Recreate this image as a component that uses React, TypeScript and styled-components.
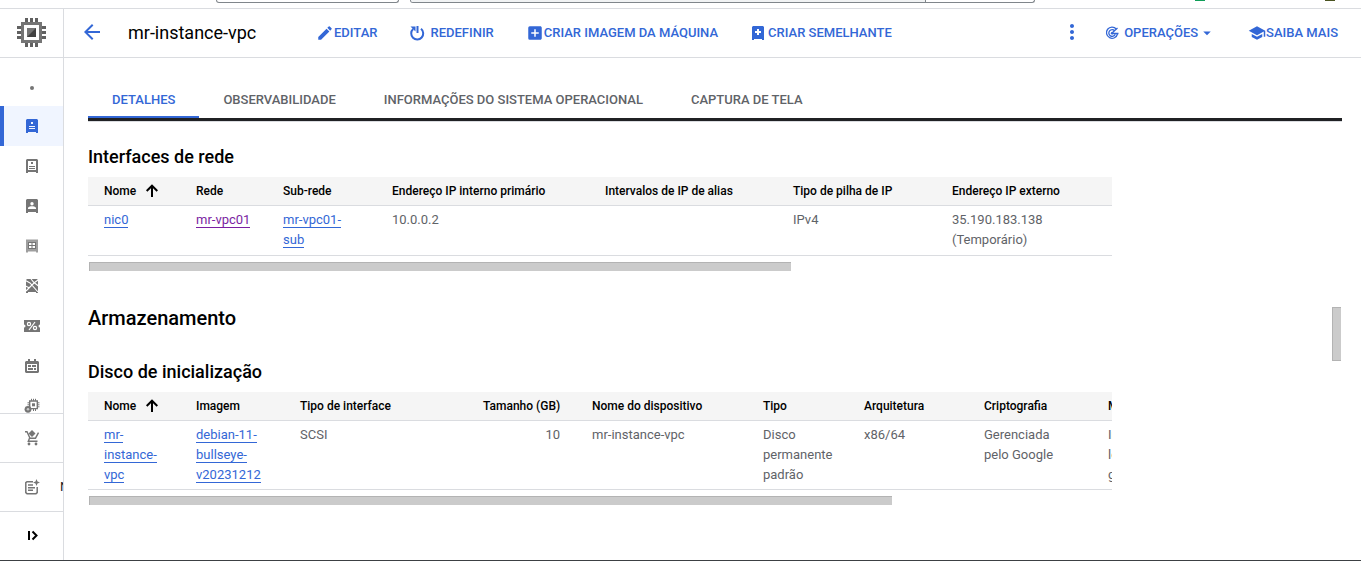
import React from "react";
import styled, { createGlobalStyle } from "styled-components";
import {
  MdAddBox,
  MdArrowBack,
  MdArrowDropDown,
  MdEdit,
  MdMoreVert,
  MdSchool,
} from "react-icons/md";

const blue = "#3367d6";
const grey = "#757575";
const line = "#dadce0";

const GlobalStyle = createGlobalStyle`
  * { box-sizing: border-box; }
  body {
    margin: 0;
    background: #fff;
    color: #000;
    font-family: Roboto, "Liberation Sans", sans-serif;
    font-size: 13px;
    line-height: 20px;
  }
  button { font: inherit; background: none; border: 0; padding: 0; cursor: pointer; }
  svg { display: block; flex: none; }
`;

const Shell = styled.div`
  display: flex;
  flex-direction: column;
  height: 100vh;
  overflow: hidden;
  border-bottom: 1px solid #3c4043;
`;

const TopStrip = styled.header`
  display: grid;
  grid-template-columns: 183px minmax(0, 625px) 1fr;
  column-gap: 11px;
  align-items: start;
  height: 9px;
  flex: none;
  padding-left: 216px;
  border-bottom: 1px solid ${line};
`;

const StripBox = styled.div`
  display: flex;
  height: 3px;
  border: 1px solid #80868b;
  border-top: 0;
  border-radius: 0 0 4px 4px;
  overflow: hidden;
`;

const SearchField = styled.div`
  flex: 1;
  background: #f1f3f4;
  border-right: 1px solid #80868b;
`;

const SearchAction = styled.div`
  width: 108px;
`;

const StripBadges = styled.div`
  display: flex;
  justify-content: flex-end;
  gap: 120px;
  padding-right: 26px;
`;

const Badge = styled.span<{ $color: string }>`
  width: 10px;
  height: 1px;
  background: ${(p) => p.$color};
`;

const Body = styled.div`
  display: flex;
  flex: 1;
  min-height: 0;
`;

const Sidebar = styled.nav`
  display: flex;
  flex-direction: column;
  width: 64px;
  flex: none;
  border-right: 1px solid ${line};
`;

const Product = styled.div`
  display: flex;
  align-items: center;
  justify-content: center;
  height: 49px;
  flex: none;
  border-bottom: 1px solid ${line};
`;

const NavList = styled.div`
  flex: 1;
  min-height: 0;
  padding-top: 8px;
  overflow: hidden;
`;

const NavItem = styled.a<{ $active?: boolean }>`
  display: flex;
  align-items: center;
  justify-content: center;
  height: 40px;
  color: ${(p) => (p.$active ? blue : grey)};
  background: ${(p) => (p.$active ? "#f0f5ff" : "transparent")};
  box-shadow: ${(p) => (p.$active ? `inset 4px 0 ${blue}` : "none")};
`;

const NavFooter = styled.a`
  display: flex;
  align-items: center;
  height: 49px;
  flex: none;
  padding-left: 24px;
  border-top: 1px solid ${line};
  color: ${grey};
  text-decoration: none;
  overflow: hidden;
`;

const FooterLabel = styled.span`
  padding-left: 20px;
  white-space: nowrap;
  color: #202124;
`;

const Content = styled.main`
  display: flex;
  flex-direction: column;
  flex: 1;
  min-width: 0;
`;

const Toolbar = styled.div`
  display: flex;
  align-items: center;
  height: 49px;
  flex: none;
  padding: 0 23px 0 16px;
  border-bottom: 1px solid ${line};
`;

const IconButton = styled.button`
  display: flex;
  padding-bottom: 2px;
  color: ${blue};
`;

const MoreButton = styled(IconButton)`
  margin-right: 20px;
`;

const Title = styled.h1`
  width: 212px;
  margin: 0;
  padding-left: 24px;
  font-size: 18px;
  font-weight: 400;
  line-height: 24px;
  white-space: nowrap;
`;

const Actions = styled.div`
  display: flex;
  flex: 1;
  gap: 32px;
`;

const Action = styled.button<{ $gap?: number }>`
  display: flex;
  align-items: center;
  gap: ${(p) => p.$gap ?? 0}px;
  color: ${blue};
  font-weight: 500;
  white-space: nowrap;
`;

const ToolbarEnd = styled.div`
  display: flex;
  align-items: center;
  gap: 32px;
`;

const MenuLabel = styled.span`
  display: flex;
  align-items: center;
`;

const Page = styled.div`
  display: grid;
  grid-template-columns: minmax(0, 1fr) 10px;
  grid-template-rows: auto minmax(0, 1fr);
  flex: 1;
  min-height: 0;
  padding: 20px 19px 0 24px;
`;

const Tabs = styled.div`
  display: flex;
  grid-column: 1 / -1;
  border-bottom: 3px solid #202124;
  box-shadow: 0 1px ${line};
`;

const Tab = styled.button<{ $active?: boolean }>`
  height: 40px;
  padding: 6px 24px 0;
  font-weight: 500;
  white-space: nowrap;
  color: ${(p) => (p.$active ? blue : "#5f6368")};
  border-bottom: 2px solid ${(p) => (p.$active ? blue : "transparent")};
`;

const Panel = styled.div`
  padding: 24px 220px 0 0;
  overflow: hidden;
`;

const Section = styled.section`
  margin-bottom: 33px;
`;

const Heading = styled.h2`
  margin: 0 0 28px;
  font-size: 20px;
  font-weight: 500;
  line-height: 28px;
`;

const SubHeading = styled.h3`
  margin: 0 0 8px;
  font-size: 18px;
  font-weight: 500;
  line-height: 24px;
`;

const TableScroll = styled.div`
  overflow: hidden;
`;

const Table = styled.table<{ $width: number }>`
  width: ${(p) => p.$width}px;
  table-layout: fixed;
  border-collapse: separate;
  border-spacing: 0;
`;

const Th = styled.th<{ $end?: boolean }>`
  height: 29px;
  padding: 0 16px;
  background: #f5f5f5;
  border-bottom: 1px solid ${line};
  font-size: 12px;
  font-weight: 500;
  text-align: ${(p) => (p.$end ? "right" : "left")};
  white-space: nowrap;
`;

const SortLabel = styled.span`
  display: flex;
  align-items: center;
  gap: 8px;
`;

const Td = styled.td<{ $end?: boolean }>`
  height: 50px;
  padding: 4px 16px;
  border-bottom: 1px solid ${line};
  color: #5f6368;
  text-align: ${(p) => (p.$end ? "right" : "left")};
  vertical-align: top;
`;

const Link = styled.a<{ $visited?: boolean }>`
  color: ${(p) => (p.$visited ? "#7b1fa2" : blue)};
  border-bottom: 1px solid currentColor;
  text-decoration: none;
`;

const HorizontalBar = styled.div<{ $thumb: number; $rest: number }>`
  display: grid;
  grid-template-columns: ${(p) => p.$thumb}fr ${(p) => p.$rest}fr;
  padding: 6px 0 0 1px;
`;

const VerticalBar = styled.div`
  display: grid;
  grid-template-rows: 186fr 54fr 199fr;
`;

const Thumb = styled.div`
  min-height: 9px;
  background: #cbcbcb;
  border: 1px solid #b3b3b3;
  border-width: 1px 0 0 1px;
`;

const VerticalThumb = styled(Thumb)`
  grid-row: 2;
  width: 9px;
  border-bottom-width: 1px;
`;

type Column = { label: string; width: number; end?: boolean; sorted?: boolean };

const networkColumns: Column[] = [
  { label: "Nome", width: 92, sorted: true },
  { label: "Rede", width: 87 },
  { label: "Sub-rede", width: 109 },
  { label: "Endereço IP interno primário", width: 213 },
  { label: "Intervalos de IP de alias", width: 188 },
  { label: "Tipo de pilha de IP", width: 159 },
  { label: "Endereço IP externo", width: 200 },
];

const diskColumns: Column[] = [
  { label: "Nome", width: 92, sorted: true },
  { label: "Imagem", width: 104 },
  { label: "Tipo de interface", width: 183 },
  { label: "Tamanho (GB)", width: 109, end: true },
  { label: "Nome do dispositivo", width: 171 },
  { label: "Tipo", width: 101 },
  { label: "Arquitetura", width: 120 },
  { label: "Criptografia", width: 124 },
  { label: "Modo", width: 120 },
];

const total = (columns: Column[]) => columns.reduce((sum, c) => sum + c.width, 0);

const Glyph = ({ children }: { children: React.ReactNode }) => (
  <svg width="16" height="16" viewBox="0 0 16 16" fill="currentColor" aria-hidden="true">
    {children}
  </svg>
);

const SortIcon = () => (
  <Glyph>
    <path fill="none" stroke="currentColor" strokeWidth="2" d="M8 14V3M2.700 8L8 2.700 13.300 8" />
  </Glyph>
);

function TableHead({ columns }: { columns: Column[] }) {
  return (
    <>
      <colgroup>
        {columns.map((c) => (
          <col key={c.label} width={c.width} />
        ))}
      </colgroup>
      <thead>
        <tr>
          {columns.map((c) => (
            <Th key={c.label} scope="col" $end={c.end}>
              {c.sorted ? (
                <SortLabel>
                  {c.label}
                  <SortIcon />
                </SortLabel>
              ) : (
                c.label
              )}
            </Th>
          ))}
        </tr>
      </thead>
    </>
  );
}

function ProductIcon() {
  return (
    <svg width="29" height="30" viewBox="0 0 29 30" aria-hidden="true">
      <path
        fill="#616161"
        d="M8 0h3v4H8zM13 0h3v4h-3zM18 0h3v4h-3zM8 25h3v4H8zM13 25h3v4h-3zM18 25h3v4h-3zM0 8h4v3H0zM0 13h4v3H0zM0 18h4v3H0zM25 8h4v3h-4zM25 13h4v3h-4zM25 18h4v3h-4z"
      />
      <path fill="#757575" fillRule="evenodd" d="M4 4h21v21H4zM7 7v15h15V7z" />
      <path fill="#757575" d="M10 10h9v9h-9z" />
      <path fill="#424242" d="M19 10v9h-9z" />
    </svg>
  );
}

const DotIcon = () => (
  <Glyph>
    <circle cx="8" cy="10" r="2" />
  </Glyph>
);

const InstanceIcon = () => (
  <Glyph>
    <path
      fillRule="evenodd"
      d="M3 1h10l1 1v13h-2v-1H4v1H2V2zM7 4v2h2V4zM5 8v1h6V8zM5 10v1h6v-1z"
    />
  </Glyph>
);

const TemplateIcon = () => (
  <Glyph>
    <path
      fillRule="evenodd"
      d="M3 1h10l1 1v13h-2v-1H4v1H2V2zM4 3v9h8V3zM7 4h2v2H7zM5 8h6v1H5zM5 10h6v1H5z"
    />
  </Glyph>
);

const SoleTenantIcon = () => (
  <Glyph>
    <path
      fillRule="evenodd"
      d="M3 1h10l1 1v13h-2v-1H4v1H2V2zM8 4a1.700 1.700 0 1 0 0 3.400A1.700 1.700 0 0 0 8 4zM4 11h8V9.800C11 8.600 9.500 8.200 8 8.200S5 8.600 4 9.800z"
    />
  </Glyph>
);

const MachineImageIcon = () => (
  <Glyph>
    <path opacity=".7" fillRule="evenodd" d="M2 1.500h12V14.500h-2v-1H4v1H2zM4 3.500v8h8v-8z" />
    <path fillRule="evenodd" d="M4 3.500h8v8H4zM5 5v2h2.500V5zM8.500 5v2H11V5zM5 8v2h2.500V8zM8.500 8v2H11V8z" />
  </Glyph>
);

const TpuIcon = () => (
  <Glyph>
    <path d="M3 1h10l1 1v13h-2v-1H4v1H2V2z" />
    <path
      d="M1.500 2.500L6 5l8 9M2 13l4-4 4-4 4-3M7 1l3 3.500L14.500 8M1.500 8L5.500 10"
      fill="none"
      stroke="#fff"
      strokeWidth="1.100"
    />
  </Glyph>
);

const DiscountIcon = () => (
  <Glyph>
    <path d="M0 2h16v4.500a1.500 1.500 0 0 0 0 3V14H0V9.500a1.500 1.500 0 0 0 0-3z" />
    <g fill="none" stroke="#fff" strokeWidth="1.200">
      <path d="M11 4l-6 8" />
      <circle cx="5" cy="6" r="1.600" />
      <circle cx="11" cy="10" r="1.600" />
    </g>
  </Glyph>
);

const ReservationIcon = () => (
  <Glyph>
    <path
      fillRule="evenodd"
      d="M4 1h2v2h4V1h2v2h2l1 1v10l-1 1H2l-1-1V4l1-1h2zM3 6v7h10V6z"
    />
    <path d="M4 7h3v2H4zM8 7h4v2H8zM4 10h5v2H4zM10 10h2v2h-2z" />
  </Glyph>
);

const MigrateIcon = () => (
  <Glyph>
    <g fill="none" stroke="currentColor">
      <path strokeWidth="1.400" d="M5.700 3h7.600v7.600H5.700z" />
      <path
        strokeWidth="1"
        d="M7.500.800v2M9.500.800v2M11.500.800v2M9.500 11v2M11.500 11v2M13.500 4.800h2M13.500 6.800h2M13.500 8.800h2M3.500 4.800h2M3.500 6.800h2"
      />
    </g>
    <path d="M8 5.300h3v3H8z" />
    <circle cx="4" cy="11.300" r="3.400" />
    <circle cx="4" cy="11.300" r="1.300" fill="#fff" opacity=".6" />
  </Glyph>
);

const MarketplaceIcon = () => (
  <Glyph>
    <path d="M8 0l3.500 3.500L8 7 4.500 3.500z" />
    <path
      fill="none"
      stroke="currentColor"
      strokeWidth="1.400"
      d="M1 1.700h2l3 6.500h5.500l3-5.500M5.500 8.200L4.300 11.300h9.200"
    />
    <circle cx="5" cy="14" r="1.400" />
    <circle cx="12" cy="14" r="1.400" />
  </Glyph>
);

const NotesIcon = () => (
  <Glyph>
    <path
      fill="none"
      stroke="currentColor"
      strokeWidth="1.500"
      d="M9 2.700H3l-1.200 1v10l1.200 1h9l1.200-1V8M4 6h5M4 8.700h7M4 11.300h5"
    />
    <path d="M12.500 0l1 2.500L16 3.500l-2.500 1-1 2.500-1-2.500L9 3.500l2.500-1z" />
  </Glyph>
);

const ExpandIcon = () => (
  <Glyph>
    <path fill="none" stroke="#000" strokeWidth="2" d="M5 3v9M8.500 3.500l4 4-4 4" />
  </Glyph>
);

const ResetIcon = () => (
  <Glyph>
    <path d="M7.500 1h2v7h-2z" />
    <path fill="none" stroke="currentColor" strokeWidth="2" d="M12 3.800a6 6 0 1 1-7.800.2" />
    <path d="M1.500 1.500h5v5z" />
  </Glyph>
);

const CloneIcon = () => (
  <Glyph>
    <path fillRule="evenodd" d="M3 1h10l1 1v13h-2v-1H4v1H2V2zM7 4v2H5v2h2v2h2V8h2V6H9V4z" />
  </Glyph>
);

const OperationsIcon = () => (
  <Glyph>
    <g fill="none" stroke="currentColor" strokeWidth="1.300">
      <path d="M12.300 4A5.600 5.600 0 1 0 13.500 9" />
      <path d="M10.600 5.800A3.300 3.300 0 1 0 11.200 9.200" />
      <path d="M8 8l5.500-5M8 8.500h6.500" />
    </g>
    <circle cx="8" cy="8.300" r="1.200" />
  </Glyph>
);

const navIcons = [
  { name: "Visão geral", Icon: DotIcon },
  { name: "Instâncias de VM", Icon: InstanceIcon, active: true },
  { name: "Modelos de instância", Icon: TemplateIcon },
  { name: "Nós de locatário individual", Icon: SoleTenantIcon },
  { name: "Imagens de máquina", Icon: MachineImageIcon },
  { name: "TPUs", Icon: TpuIcon },
  { name: "Descontos", Icon: DiscountIcon },
  { name: "Reservas", Icon: ReservationIcon },
  { name: "Migrar", Icon: MigrateIcon },
];

export default function App() {
  return (
    <>
      <GlobalStyle />
      <Shell>
        <TopStrip>
          <StripBox />
          <StripBox>
            <SearchField />
            <SearchAction />
          </StripBox>
          <StripBadges>
            <Badge $color="#0f9d58" />
            <Badge $color="#4b5320" />
          </StripBadges>
        </TopStrip>
        <Body>
          <Sidebar>
            <Product>
              <ProductIcon />
            </Product>
            <NavList>
              {navIcons.map(({ name, Icon, active }) => (
                <NavItem key={name} href="#" aria-label={name} $active={active}>
                  <Icon />
                </NavItem>
              ))}
            </NavList>
            <NavFooter href="#" aria-label="Marketplace">
              <MarketplaceIcon />
            </NavFooter>
            <NavFooter href="#">
              <NotesIcon />
              <FooterLabel>Notas da versão</FooterLabel>
            </NavFooter>
            <NavFooter href="#" aria-label="Expandir menu">
              <ExpandIcon />
            </NavFooter>
          </Sidebar>
          <Content>
            <Toolbar>
              <IconButton aria-label="Voltar">
                <MdArrowBack size={24} />
              </IconButton>
              <Title>mr-instance-vpc</Title>
              <Actions>
                <Action>
                  <MdEdit size={18} />
                  EDITAR
                </Action>
                <Action $gap={5}>
                  <ResetIcon />
                  REDEFINIR
                </Action>
                <Action>
                  <MdAddBox size={18} />
                  CRIAR IMAGEM DA MÁQUINA
                </Action>
                <Action $gap={2}>
                  <CloneIcon />
                  CRIAR SEMELHANTE
                </Action>
              </Actions>
              <MoreButton aria-label="Mais ações">
                <MdMoreVert size={24} />
              </MoreButton>
              <ToolbarEnd>
                <Action $gap={4}>
                  <OperationsIcon />
                  <MenuLabel>
                    OPERAÇÕES
                    <MdArrowDropDown size={18} />
                  </MenuLabel>
                </Action>
                <Action>
                  <MdSchool size={18} />
                  SAIBA MAIS
                </Action>
              </ToolbarEnd>
            </Toolbar>
            <Page>
              <Tabs role="tablist">
                <Tab role="tab" aria-selected $active>
                  DETALHES
                </Tab>
                <Tab role="tab">OBSERVABILIDADE</Tab>
                <Tab role="tab">INFORMAÇÕES DO SISTEMA OPERACIONAL</Tab>
                <Tab role="tab">CAPTURA DE TELA</Tab>
              </Tabs>
              <Panel>
                <Section>
                  <SubHeading>Interfaces de rede</SubHeading>
                  <TableScroll>
                    <Table $width={total(networkColumns)}>
                      <TableHead columns={networkColumns} />
                      <tbody>
                        <tr>
                          <Td>
                            <Link href="#">nic0</Link>
                          </Td>
                          <Td>
                            <Link href="#" $visited>
                              mr-vpc01
                            </Link>
                          </Td>
                          <Td>
                            <Link href="#">
                              mr-vpc01-
                              <br />
                              sub
                            </Link>
                          </Td>
                          <Td>10.0.0.2</Td>
                          <Td />
                          <Td>IPv4</Td>
                          <Td>
                            35.190.183.138
                            <br />
                            (Temporário)
                          </Td>
                        </tr>
                      </tbody>
                    </Table>
                  </TableScroll>
                  <HorizontalBar $thumb={702} $rest={321}>
                    <Thumb />
                  </HorizontalBar>
                </Section>
                <Section>
                  <Heading>Armazenamento</Heading>
                  <SubHeading>Disco de inicialização</SubHeading>
                  <TableScroll>
                    <Table $width={total(diskColumns)}>
                      <TableHead columns={diskColumns} />
                      <tbody>
                        <tr>
                          <Td>
                            <Link href="#">
                              mr-
                              <br />
                              instance-
                              <br />
                              vpc
                            </Link>
                          </Td>
                          <Td>
                            <Link href="#">
                              debian-11-
                              <br />
                              bullseye-
                              <br />
                              v20231212
                            </Link>
                          </Td>
                          <Td>SCSI</Td>
                          <Td $end>10</Td>
                          <Td>mr-instance-vpc</Td>
                          <Td>Disco permanente padrão</Td>
                          <Td>x86/64</Td>
                          <Td>Gerenciada pelo Google</Td>
                          <Td>
                            Inicialização,
                            <br />
                            leitura/
                            <br />
                            gravação
                          </Td>
                        </tr>
                      </tbody>
                    </Table>
                  </TableScroll>
                  <HorizontalBar $thumb={803} $rest={220}>
                    <Thumb />
                  </HorizontalBar>
                </Section>
              </Panel>
              <VerticalBar>
                <VerticalThumb />
              </VerticalBar>
            </Page>
          </Content>
        </Body>
      </Shell>
    </>
  );
}
